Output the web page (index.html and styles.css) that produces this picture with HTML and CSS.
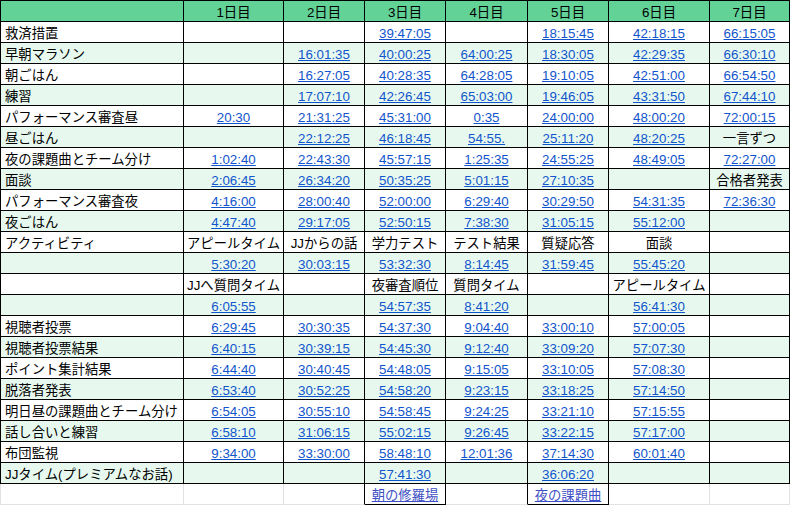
FILE: index.html
```html
<!DOCTYPE html>
<html lang="ja">
<head>
<meta charset="utf-8">
<title>スケジュール</title>
<link rel="stylesheet" href="styles.css">
</head>
<body>
<table class="sheet">
<colgroup>
<col class="w0"><col class="w1"><col class="w2"><col class="w3"><col class="w4"><col class="w5"><col class="w6"><col class="w7">
</colgroup>
<thead>
<tr><th class="name"></th><th>1日目</th><th>2日目</th><th>3日目</th><th>4日目</th><th>5日目</th><th>6日目</th><th>7日目</th></tr>
</thead>
<tbody>
<tr><td class="name">救済措置</td><td></td><td></td><td><a href="#">39:47:05</a></td><td></td><td><a href="#">18:15:45</a></td><td><a href="#">42:18:15</a></td><td><a href="#">66:15:05</a></td></tr>
<tr class="alt"><td class="name">早朝マラソン</td><td></td><td><a href="#">16:01:35</a></td><td><a href="#">40:00:25</a></td><td><a href="#">64:00:25</a></td><td><a href="#">18:30:05</a></td><td><a href="#">42:29:35</a></td><td><a href="#">66:30:10</a></td></tr>
<tr><td class="name">朝ごはん</td><td></td><td><a href="#">16:27:05</a></td><td><a href="#">40:28:35</a></td><td><a href="#">64:28:05</a></td><td><a href="#">19:10:05</a></td><td><a href="#">42:51:00</a></td><td><a href="#">66:54:50</a></td></tr>
<tr class="alt"><td class="name">練習</td><td></td><td><a href="#">17:07:10</a></td><td><a href="#">42:26:45</a></td><td><a href="#">65:03:00</a></td><td><a href="#">19:46:05</a></td><td><a href="#">43:31:50</a></td><td><a href="#">67:44:10</a></td></tr>
<tr><td class="name">パフォーマンス審査昼</td><td><a href="#">20:30</a></td><td><a href="#">21:31:25</a></td><td><a href="#">45:31:00</a></td><td><a href="#">0:35</a></td><td><a href="#">24:00:00</a></td><td><a href="#">48:00:20</a></td><td><a href="#">72:00:15</a></td></tr>
<tr class="alt"><td class="name">昼ごはん</td><td></td><td><a href="#">22:12:25</a></td><td><a href="#">46:18:45</a></td><td><a href="#">54:55.</a></td><td><a href="#">25:11:20</a></td><td><a href="#">48:20:25</a></td><td>一言ずつ</td></tr>
<tr><td class="name">夜の課題曲とチーム分け</td><td><a href="#">1:02:40</a></td><td><a href="#">22:43:30</a></td><td><a href="#">45:57:15</a></td><td><a href="#">1:25:35</a></td><td><a href="#">24:55:25</a></td><td><a href="#">48:49:05</a></td><td><a href="#">72:27:00</a></td></tr>
<tr class="alt"><td class="name">面談</td><td><a href="#">2:06:45</a></td><td><a href="#">26:34:20</a></td><td><a href="#">50:35:25</a></td><td><a href="#">5:01:15</a></td><td><a href="#">27:10:35</a></td><td></td><td>合格者発表</td></tr>
<tr><td class="name">パフォーマンス審査夜</td><td><a href="#">4:16:00</a></td><td><a href="#">28:00:40</a></td><td><a href="#">52:00:00</a></td><td><a href="#">6:29:40</a></td><td><a href="#">30:29:50</a></td><td><a href="#">54:31:35</a></td><td><a href="#">72:36:30</a></td></tr>
<tr class="alt"><td class="name">夜ごはん</td><td><a href="#">4:47:40</a></td><td><a href="#">29:17:05</a></td><td><a href="#">52:50:15</a></td><td><a href="#">7:38:30</a></td><td><a href="#">31:05:15</a></td><td><a href="#">55:12:00</a></td><td></td></tr>
<tr><td class="name">アクティビティ</td><td>アピールタイム</td><td>JJからの話</td><td>学力テスト</td><td>テスト結果</td><td>質疑応答</td><td>面談</td><td></td></tr>
<tr class="alt"><td class="name"></td><td><a href="#">5:30:20</a></td><td><a href="#">30:03:15</a></td><td><a href="#">53:32:30</a></td><td><a href="#">8:14:45</a></td><td><a href="#">31:59:45</a></td><td><a href="#">55:45:20</a></td><td></td></tr>
<tr><td class="name"></td><td>JJへ質問タイム</td><td></td><td>夜審査順位</td><td>質問タイム</td><td></td><td>アピールタイム</td><td></td></tr>
<tr class="alt"><td class="name"></td><td><a href="#">6:05:55</a></td><td></td><td><a href="#">54:57:35</a></td><td><a href="#">8:41:20</a></td><td></td><td><a href="#">56:41:30</a></td><td></td></tr>
<tr><td class="name">視聴者投票</td><td><a href="#">6:29:45</a></td><td><a href="#">30:30:35</a></td><td><a href="#">54:37:30</a></td><td><a href="#">9:04:40</a></td><td><a href="#">33:00:10</a></td><td><a href="#">57:00:05</a></td><td></td></tr>
<tr class="alt"><td class="name">視聴者投票結果</td><td><a href="#">6:40:15</a></td><td><a href="#">30:39:15</a></td><td><a href="#">54:45:30</a></td><td><a href="#">9:12:40</a></td><td><a href="#">33:09:20</a></td><td><a href="#">57:07:30</a></td><td></td></tr>
<tr><td class="name">ポイント集計結果</td><td><a href="#">6:44:40</a></td><td><a href="#">30:40:45</a></td><td><a href="#">54:48:05</a></td><td><a href="#">9:15:05</a></td><td><a href="#">33:10:05</a></td><td><a href="#">57:08:30</a></td><td></td></tr>
<tr class="alt"><td class="name">脱落者発表</td><td><a href="#">6:53:40</a></td><td><a href="#">30:52:25</a></td><td><a href="#">54:58:20</a></td><td><a href="#">9:23:15</a></td><td><a href="#">33:18:25</a></td><td><a href="#">57:14:50</a></td><td></td></tr>
<tr><td class="name">明日昼の課題曲とチーム分け</td><td><a href="#">6:54:05</a></td><td><a href="#">30:55:10</a></td><td><a href="#">54:58:45</a></td><td><a href="#">9:24:25</a></td><td><a href="#">33:21:10</a></td><td><a href="#">57:15:55</a></td><td></td></tr>
<tr class="alt"><td class="name">話し合いと練習</td><td><a href="#">6:58:10</a></td><td><a href="#">31:06:15</a></td><td><a href="#">55:02:15</a></td><td><a href="#">9:26:45</a></td><td><a href="#">33:22:15</a></td><td><a href="#">57:17:00</a></td><td></td></tr>
<tr><td class="name">布団監視</td><td><a href="#">9:34:00</a></td><td><a href="#">33:30:00</a></td><td><a href="#">58:48:10</a></td><td><a href="#">12:01:36</a></td><td><a href="#">37:14:30</a></td><td><a href="#">60:01:40</a></td><td></td></tr>
<tr class="alt"><td class="name">JJタイム(プレミアムなお話)</td><td></td><td></td><td><a href="#">57:41:30</a></td><td></td><td><a href="#">36:06:20</a></td><td></td><td></td></tr>
<tr class="last"><td class="name"></td><td></td><td class="pre"></td><td class="lk"><a href="#">朝の修羅場</a></td><td class="pre"></td><td class="lk"><a href="#">夜の課題曲</a></td><td></td><td></td></tr>
</tbody>
</table>
</body>
</html>
```
FILE: styles.css
```css
body {
  margin: 0;
  background: #fff;
  color: #000;
  font-family: "Liberation Sans", Arial, "Noto Sans CJK JP", sans-serif;
  font-size: 13.33px;
}

.sheet {
  border-collapse: separate;
  border-spacing: 0;
  table-layout: fixed;
  width: 790px;
}

.w0 { width: 184px; }
.w1 { width: 100px; }
.w2 { width: 81px; }
.w3 { width: 81px; }
.w4 { width: 82px; }
.w5 { width: 81px; }
.w6 { width: 101px; }
.w7 { width: 80px; }

.sheet th,
.sheet td {
  height: 20px;
  padding: 0 2px;
  border-right: 1px solid #000;
  border-bottom: 1px solid #000;
  vertical-align: bottom;
  line-height: 16px;
  text-align: center;
  white-space: nowrap;
  font-weight: normal;
}

.sheet th {
  background: #63d297;
  border-top: 1px solid #000;
}

.sheet .name {
  border-left: 1px solid #000;
  text-align: left;
  padding-left: 4px;
}

.sheet tr.alt td {
  background: #e7f9ef;
}

.sheet a {
  color: #1155cc;
  text-decoration: underline;
}

.sheet tr.last td {
  border-right-color: #e2e2e2;
  border-bottom-color: #e2e2e2;
}

.sheet tr.last td.name {
  border-left-color: #e2e2e2;
}

.sheet tr.last td.pre {
  border-right-color: #000;
}

.sheet tr.last td.lk {
  border-right-color: #000;
  border-bottom-color: #000;
}

.sheet tr.last td.lk a {
  color: #3d4fc4;
}
```
